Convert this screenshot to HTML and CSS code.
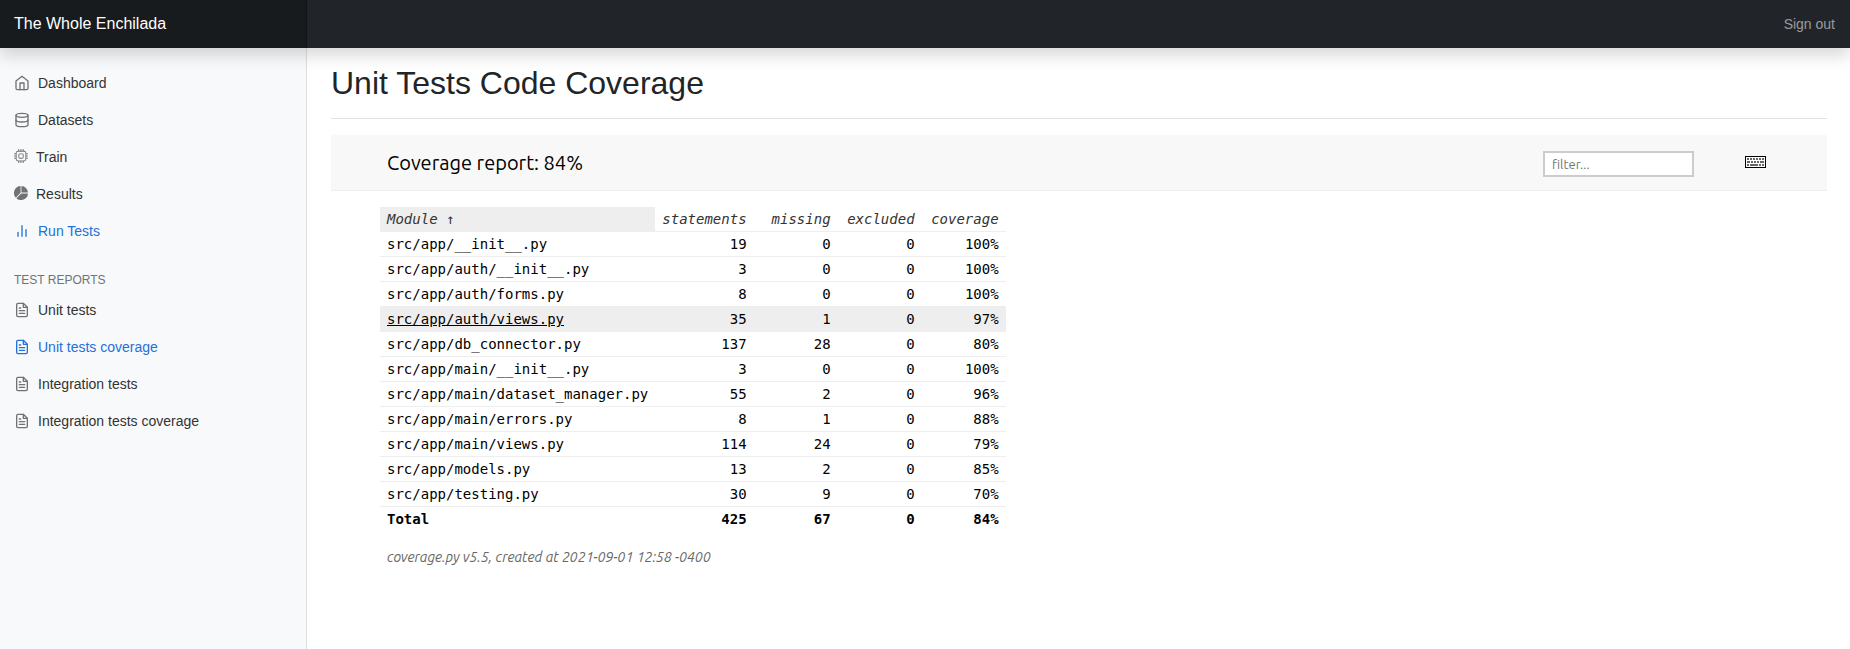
FILE: index.html
```html
<!DOCTYPE html>
<html lang="en">
<head>
<meta charset="utf-8">
<title>Unit Tests Code Coverage</title>
<link rel="stylesheet" href="styles.css">
</head>
<body>
<svg class="sprite" aria-hidden="true">
  <symbol id="file-text" viewBox="0 0 24 24"><path d="M14 2H6a2 2 0 0 0-2 2v16a2 2 0 0 0 2 2h12a2 2 0 0 0 2-2V8z"/><path d="M14 2v6h6M16 13H8M16 17H8M10 9H8"/></symbol>
</svg>
<header class="topbar">
  <a class="brand" href="#">The Whole Enchilada</a>
  <a class="sign-out" href="#">Sign out</a>
</header>
<div class="layout">
  <nav class="sidebar">
    <ul class="nav">
      <li><a class="nav-link" href="#"><svg class="feather" viewBox="0 0 24 24"><path d="M3 9l9-7 9 7v11a2 2 0 0 1-2 2H5a2 2 0 0 1-2-2z"/><path d="M9 22V12h6v10"/></svg>Dashboard</a></li>
      <li><a class="nav-link" href="#"><svg class="feather" viewBox="0 0 24 24"><ellipse cx="12" cy="5" rx="9" ry="3"/><path d="M21 12c0 1.66-4 3-9 3s-9-1.34-9-3"/><path d="M3 5v14c0 1.66 4 3 9 3s9-1.34 9-3V5"/></svg>Datasets</a></li>
      <li><a class="nav-link" href="#"><svg class="glyph" viewBox="0 0 16 16"><path d="M5 0a.5.5 0 0 1 .5.5V2h1V.5a.5.5 0 0 1 1 0V2h1V.5a.5.5 0 0 1 1 0V2h1V.5a.5.5 0 0 1 1 0V2A2.5 2.5 0 0 1 14 4.5h1.5a.5.5 0 0 1 0 1H14v1h1.5a.5.5 0 0 1 0 1H14v1h1.5a.5.5 0 0 1 0 1H14v1h1.5a.5.5 0 0 1 0 1H14a2.5 2.5 0 0 1-2.5 2.5v1.5a.5.5 0 0 1-1 0V14h-1v1.5a.5.5 0 0 1-1 0V14h-1v1.5a.5.5 0 0 1-1 0V14h-1v1.5a.5.5 0 0 1-1 0V14A2.5 2.5 0 0 1 2 11.5H.5a.5.5 0 0 1 0-1H2v-1H.5a.5.5 0 0 1 0-1H2v-1H.5a.5.5 0 0 1 0-1H2v-1H.5a.5.5 0 0 1 0-1H2A2.5 2.5 0 0 1 4.5 2V.5A.5.5 0 0 1 5 0zm-.5 3A1.5 1.5 0 0 0 3 4.5v7A1.5 1.5 0 0 0 4.5 13h7a1.5 1.5 0 0 0 1.5-1.5v-7A1.5 1.5 0 0 0 11.5 3h-7zM5 6.5A1.5 1.5 0 0 1 6.5 5h3A1.5 1.5 0 0 1 11 6.5v3A1.5 1.5 0 0 1 9.5 11h-3A1.5 1.5 0 0 1 5 9.5v-3zM6.5 6a.5.5 0 0 0-.5.5v3a.5.5 0 0 0 .5.5h3a.5.5 0 0 0 .5-.5v-3a.5.5 0 0 0-.5-.5h-3z"/></svg>Train</a></li>
      <li><a class="nav-link" href="#"><svg class="glyph" viewBox="0 0 16 16"><path d="M15.985 8.5H8.207l-5.5 5.5a8 8 0 0 0 13.278-5.5zM2 13.292A8 8 0 0 1 7.5.015v7.778l-5.5 5.5zM8.5.015V7.5h7.485A8.001 8.001 0 0 0 8.5.015z"/></svg>Results</a></li>
      <li><a class="nav-link active" href="#"><svg class="feather" viewBox="0 0 24 24"><path d="M18 20V10M12 20V4M6 20v-6"/></svg>Run Tests</a></li>
    </ul>
    <h2 class="nav-heading">Test reports</h2>
    <ul class="nav">
      <li><a class="nav-link" href="#"><svg class="feather"><use href="#file-text"/></svg>Unit tests</a></li>
      <li><a class="nav-link active" href="#"><svg class="feather"><use href="#file-text"/></svg>Unit tests coverage</a></li>
      <li><a class="nav-link" href="#"><svg class="feather"><use href="#file-text"/></svg>Integration tests</a></li>
      <li><a class="nav-link" href="#"><svg class="feather"><use href="#file-text"/></svg>Integration tests coverage</a></li>
    </ul>
  </nav>
  <main class="content">
    <h1 class="page-title">Unit Tests Code Coverage</h1>
    <section class="report">
      <div class="report-header">
        <h2 class="report-title">Coverage report: 84%</h2>
        <input class="filter" type="text" placeholder="filter..." aria-label="Filter modules">
        <button class="keyboard" type="button" aria-label="Keyboard shortcuts"><svg viewBox="0 0 21 12" shape-rendering="crispEdges"><path fill="#fff" stroke="#000" d="M.5.5h20v11H.5z"/><path fill="#666" d="M2 2h2v2H2zM5 2h2v2H5zM8 2h2v2H8zM11 2h2v2h-2zM14 2h2v2h-2zM17 2h2v2h-2zM2 5h3v2H2zM6 5h2v2H6zM9 5h2v2H9zM12 5h2v2h-2zM15 5h4v2h-4zM2 8h2v2H2zM5 8h8v2H5zM14 8h2v2h-2zM17 8h2v2h-2z"/></svg></button>
      </div>
      <table class="coverage">
        <thead><tr><th class="sorted">Module ↑</th><th>statements</th><th>missing</th><th>excluded</th><th>coverage</th></tr></thead>
        <tbody>
          <tr><td><a href="#">src/app/__init__.py</a></td><td>19</td><td>0</td><td>0</td><td>100%</td></tr>
          <tr><td><a href="#">src/app/auth/__init__.py</a></td><td>3</td><td>0</td><td>0</td><td>100%</td></tr>
          <tr><td><a href="#">src/app/auth/forms.py</a></td><td>8</td><td>0</td><td>0</td><td>100%</td></tr>
          <tr class="hovered"><td><a href="#">src/app/auth/views.py</a></td><td>35</td><td>1</td><td>0</td><td>97%</td></tr>
          <tr><td><a href="#">src/app/db_connector.py</a></td><td>137</td><td>28</td><td>0</td><td>80%</td></tr>
          <tr><td><a href="#">src/app/main/__init__.py</a></td><td>3</td><td>0</td><td>0</td><td>100%</td></tr>
          <tr><td><a href="#">src/app/main/dataset_manager.py</a></td><td>55</td><td>2</td><td>0</td><td>96%</td></tr>
          <tr><td><a href="#">src/app/main/errors.py</a></td><td>8</td><td>1</td><td>0</td><td>88%</td></tr>
          <tr><td><a href="#">src/app/main/views.py</a></td><td>114</td><td>24</td><td>0</td><td>79%</td></tr>
          <tr><td><a href="#">src/app/models.py</a></td><td>13</td><td>2</td><td>0</td><td>85%</td></tr>
          <tr><td><a href="#">src/app/testing.py</a></td><td>30</td><td>9</td><td>0</td><td>70%</td></tr>
        </tbody>
        <tfoot><tr><td>Total</td><td>425</td><td>67</td><td>0</td><td>84%</td></tr></tfoot>
      </table>
      <p class="report-footer">coverage.py v5.5, created at 2021-09-01 12:58 -0400</p>
    </section>
  </main>
</div>
</body>
</html>
```
FILE: styles.css
```css
*, *::before, *::after { box-sizing: border-box; }

body {
  margin: 0;
  min-height: 100vh;
  display: flex;
  flex-direction: column;
  background: #fff;
  color: #212529;
  font-family: "Liberation Sans", Arial, sans-serif;
  font-size: 14px;
  line-height: 21px;
}

a { color: inherit; text-decoration: none; }

.sprite { display: none; }

.topbar {
  position: sticky;
  top: 0;
  z-index: 1;
  display: flex;
  justify-content: space-between;
  align-items: center;
  height: 48px;
  background: #212529;
  box-shadow: 0 8px 16px rgba(0, 0, 0, .15);
}

.brand {
  width: 307px;
  padding: 12px 14px;
  background: rgba(0, 0, 0, .25);
  box-shadow: inset -1px 0 0 rgba(0, 0, 0, .25);
  color: #fff;
  font-size: 16px;
  line-height: 24px;
}

.sign-out { padding: 0 15px; color: rgba(255, 255, 255, .55); }

.layout {
  flex: 1;
  display: grid;
  grid-template-columns: 307px 1fr;
}

.sidebar {
  padding-top: 17px;
  background: #f8f9fa;
  box-shadow: inset -1px 0 0 rgba(0, 0, 0, .1);
}

.nav { margin: 0; padding: 0; list-style: none; }

.nav-link {
  display: flex;
  align-items: center;
  gap: 8px;
  padding: 8px 14px;
  color: #333;
}

.nav-link.active { color: #2470dc; }

.feather {
  width: 16px;
  height: 16px;
  margin-bottom: 1px;
  fill: none;
  stroke: #727272;
  stroke-width: 2;
  stroke-linecap: round;
  stroke-linejoin: round;
}

.active .feather { stroke: currentColor; }

.glyph { width: 14px; height: 14px; margin-bottom: 3px; fill: #727272; }

.nav-heading {
  margin: 23px 14px 5px;
  color: #6c757d;
  font-size: 12px;
  font-weight: 400;
  line-height: 14px;
  text-transform: uppercase;
}

.content { padding: 16px 23px 16px 24px; }

.page-title {
  margin: 0 0 16px;
  padding-bottom: 16px;
  border-bottom: 1px solid #dee2e6;
  font-size: 32px;
  font-weight: 400;
  line-height: 38px;
}

.report { color: #000; font-family: Ubuntu, "Noto Sans", sans-serif; }

.report-header {
  display: flex;
  align-items: center;
  height: 56px;
  padding: 0 61px 0 56px;
  background: #f8f8f8;
  border-bottom: 1px solid #eee;
}

.report-title {
  flex: 1;
  margin: 0;
  font-size: 20px;
  font-weight: 400;
  line-height: 24px;
}

.filter {
  width: 151px;
  height: 26px;
  margin: 2px 51px 0 0;
  padding: 0 7px;
  border: 2px solid #ccc;
  background: #fff;
  font: inherit;
  font-size: 13px;
}

.filter::placeholder { color: #757575; }

.keyboard {
  display: flex;
  margin-bottom: 2px;
  padding: 0;
  border: 0;
  background: none;
}

.keyboard svg { width: 21px; height: 12px; }

.coverage {
  margin: 16px 0 0 49px;
  border-collapse: collapse;
  font-family: "DejaVu Sans Mono", monospace;
  line-height: 16px;
}

.coverage th,
.coverage td {
  min-width: 84px;
  padding: 4px 7px;
  border-bottom: 1px solid #eee;
  text-align: right;
  white-space: nowrap;
}

.coverage th:first-child,
.coverage td:first-child { text-align: left; }

.coverage th { color: #333; font-style: italic; font-weight: 400; }

.coverage .sorted,
.coverage .hovered { background: #eee; }

.hovered a { text-decoration: underline; }

.coverage tfoot td { border: 0; font-weight: 700; }

.report-footer {
  margin: 16px 56px;
  color: #666;
  font-size: 14px;
  font-style: italic;
}
```
